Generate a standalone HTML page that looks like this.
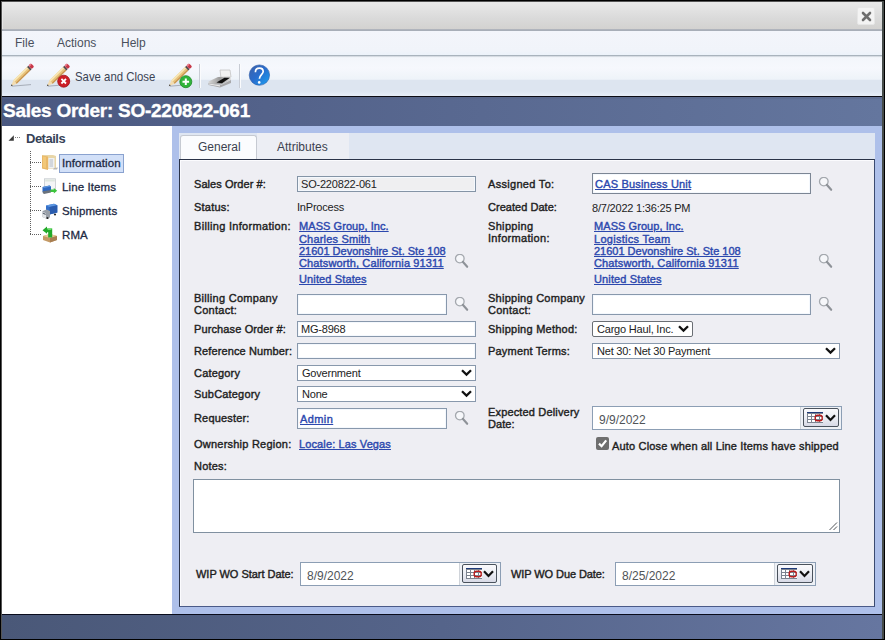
<!DOCTYPE html>
<html><head><meta charset="utf-8"><style>
html,body{margin:0;padding:0}
body{width:885px;height:640px;position:relative;overflow:hidden;background:#000;font-family:"Liberation Sans",sans-serif}
.t{position:absolute;white-space:nowrap;font-family:"Liberation Sans",sans-serif}
a{color:inherit}
</style></head><body>
<div style="position:absolute;left:1px;top:1px;width:883px;height:638px;box-sizing:border-box;background:#555"></div>
<div style="position:absolute;left:2px;top:2px;width:880px;height:27px;box-sizing:border-box;background:linear-gradient(#e9e9e9,#dadada 60%,#d3d2d0)"></div>
<div style="position:absolute;left:2px;top:2px;width:880px;height:1px;box-sizing:border-box;background:#e8e8e8"></div>
<div style="position:absolute;left:2px;top:2px;width:1px;height:27px;box-sizing:border-box;background:#e6e6e6"></div>
<div style="position:absolute;left:2px;top:29px;width:880px;height:1px;box-sizing:border-box;background:#b0b4bc"></div>
<div style="position:absolute;left:2px;top:30px;width:880px;height:1px;box-sizing:border-box;background:#a8aeb8"></div>
<div style="position:absolute;left:857px;top:7px;width:18px;height:18px;box-sizing:border-box;background:#f3f3f3;border-radius:2px;border:1px solid #e6e6e6"></div>
<svg style="position:absolute;left:861px;top:11px" width="11" height="11" viewBox="0 0 11 11"><path d="M2 2 L9 9 M9 2 L2 9" stroke="#6e6e6e" stroke-width="2.6" stroke-linecap="round"/></svg>
<div style="position:absolute;left:2px;top:31px;width:880px;height:24px;box-sizing:border-box;background:linear-gradient(#f3f5fb,#f1f4fa 80%,#ecf2fa)"></div>
<div style="position:absolute;left:2px;top:55px;width:880px;height:1px;box-sizing:border-box;background:#a9b3bd"></div>
<div class="t" style="left:15px;top:36px;font-size:12px;line-height:14px;font-weight:normal;color:#4a505c;letter-spacing:0px;">File</div>
<div class="t" style="left:57px;top:36px;font-size:12px;line-height:14px;font-weight:normal;color:#4a505c;letter-spacing:0px;">Actions</div>
<div class="t" style="left:121px;top:36px;font-size:12px;line-height:14px;font-weight:normal;color:#4a505c;letter-spacing:0px;">Help</div>
<div style="position:absolute;left:2px;top:56px;width:880px;height:40px;box-sizing:border-box;background:linear-gradient(#c9d0d8,#f3f6fb 4%,#f6f8fd 30%,#eef3f9 58%,#dde5f0 61%,#dde5f0 88%,#e7eef8)"></div>
<div style="position:absolute;left:2px;top:96px;width:880px;height:1px;box-sizing:border-box;background:#0c0c14"></div>
<div style="position:absolute;left:2px;top:97px;width:880px;height:29px;box-sizing:border-box;background:linear-gradient(90deg,#4a5880,#53628a 30%,#64769e)"></div>
<div style="position:absolute;left:2px;top:97px;width:880px;height:2px;box-sizing:border-box;background:rgba(90,100,130,0.35)"></div>
<div class="t" style="left:3px;top:100px;font-size:19px;line-height:22px;font-weight:bold;color:#ffffff;letter-spacing:-0.25px;-webkit-text-stroke:0.35px #fff">Sales Order: SO-220822-061</div>
<div style="position:absolute;left:2px;top:126px;width:170px;height:488px;box-sizing:border-box;background:#fff"></div>
<div style="position:absolute;left:172px;top:126px;width:710px;height:488px;box-sizing:border-box;background:#aec0ea"></div>
<div style="position:absolute;left:2px;top:614px;width:880px;height:1px;box-sizing:border-box;background:#0a0c1c"></div>
<div style="position:absolute;left:2px;top:615px;width:880px;height:24px;box-sizing:border-box;background:linear-gradient(90deg,#4a5878,#55648a 50%,#6676a0)"></div>
<div style="position:absolute;left:882px;top:1px;width:2px;height:638px;box-sizing:border-box;background:#464c4a"></div>
<div style="position:absolute;left:884px;top:0px;width:1px;height:640px;box-sizing:border-box;background:#000"></div>
<div style="position:absolute;left:179px;top:133px;width:696px;height:26px;box-sizing:border-box;background:#dfe6f2"></div>
<div style="position:absolute;left:257px;top:133px;width:92px;height:26px;box-sizing:border-box;background:#eceef4"></div>
<div style="position:absolute;left:180px;top:135px;width:77px;height:25px;box-sizing:border-box;background:#fbfcfe;border:1px solid #c6cad2;border-bottom:none;border-radius:3px 3px 0 0"></div>
<div class="t" style="left:198px;top:140px;font-size:12px;line-height:14px;font-weight:normal;color:#3c4250;letter-spacing:0px;">General</div>
<div class="t" style="left:277px;top:140px;font-size:12px;line-height:14px;font-weight:normal;color:#3c4250;letter-spacing:0px;">Attributes</div>
<div style="position:absolute;left:179px;top:159px;width:696px;height:448px;box-sizing:border-box;background:#eeeef3;border:1px solid #2a3348;border-right-color:#3a4a70;border-bottom-color:#4a5a88"></div>
<div style="position:absolute;left:180px;top:160px;width:694px;height:1px;box-sizing:border-box;background:#fbfbfe"></div>
<div style="position:absolute;left:180px;top:160px;width:1px;height:446px;box-sizing:border-box;background:#fbfbfe"></div>
<svg style="position:absolute;left:8px;top:134px" width="14" height="8" viewBox="0 0 14 8"><polygon points="0.5,6.8 5.8,1.3 5.8,6.8" fill="#3a3a3a"/><rect x="7" y="3" width="1" height="1" fill="#808080"/><rect x="9" y="3" width="1" height="1" fill="#808080"/><rect x="11" y="3" width="1" height="1" fill="#808080"/></svg>
<div class="t" style="left:26px;top:131px;font-size:13px;line-height:15px;font-weight:bold;color:#364256;letter-spacing:-0.5px;">Details</div>
<svg style="position:absolute;left:29px;top:151px" width="14" height="90" viewBox="0 0 14 90"><rect x="1" y="0" width="1" height="1" fill="#606060"/><rect x="1" y="2" width="1" height="1" fill="#606060"/><rect x="1" y="4" width="1" height="1" fill="#606060"/><rect x="1" y="6" width="1" height="1" fill="#606060"/><rect x="1" y="8" width="1" height="1" fill="#606060"/><rect x="1" y="10" width="1" height="1" fill="#606060"/><rect x="1" y="12" width="1" height="1" fill="#606060"/><rect x="1" y="14" width="1" height="1" fill="#606060"/><rect x="1" y="16" width="1" height="1" fill="#606060"/><rect x="1" y="18" width="1" height="1" fill="#606060"/><rect x="1" y="20" width="1" height="1" fill="#606060"/><rect x="1" y="22" width="1" height="1" fill="#606060"/><rect x="1" y="24" width="1" height="1" fill="#606060"/><rect x="1" y="26" width="1" height="1" fill="#606060"/><rect x="1" y="28" width="1" height="1" fill="#606060"/><rect x="1" y="30" width="1" height="1" fill="#606060"/><rect x="1" y="32" width="1" height="1" fill="#606060"/><rect x="1" y="34" width="1" height="1" fill="#606060"/><rect x="1" y="36" width="1" height="1" fill="#606060"/><rect x="1" y="38" width="1" height="1" fill="#606060"/><rect x="1" y="40" width="1" height="1" fill="#606060"/><rect x="1" y="42" width="1" height="1" fill="#606060"/><rect x="1" y="44" width="1" height="1" fill="#606060"/><rect x="1" y="46" width="1" height="1" fill="#606060"/><rect x="1" y="48" width="1" height="1" fill="#606060"/><rect x="1" y="50" width="1" height="1" fill="#606060"/><rect x="1" y="52" width="1" height="1" fill="#606060"/><rect x="1" y="54" width="1" height="1" fill="#606060"/><rect x="1" y="56" width="1" height="1" fill="#606060"/><rect x="1" y="58" width="1" height="1" fill="#606060"/><rect x="1" y="60" width="1" height="1" fill="#606060"/><rect x="1" y="62" width="1" height="1" fill="#606060"/><rect x="1" y="64" width="1" height="1" fill="#606060"/><rect x="1" y="66" width="1" height="1" fill="#606060"/><rect x="1" y="68" width="1" height="1" fill="#606060"/><rect x="1" y="70" width="1" height="1" fill="#606060"/><rect x="1" y="72" width="1" height="1" fill="#606060"/><rect x="1" y="74" width="1" height="1" fill="#606060"/><rect x="1" y="76" width="1" height="1" fill="#606060"/><rect x="1" y="78" width="1" height="1" fill="#606060"/><rect x="1" y="80" width="1" height="1" fill="#606060"/><rect x="1" y="82" width="1" height="1" fill="#606060"/><rect x="1" y="11" width="1" height="1" fill="#606060"/><rect x="3" y="11" width="1" height="1" fill="#606060"/><rect x="5" y="11" width="1" height="1" fill="#606060"/><rect x="7" y="11" width="1" height="1" fill="#606060"/><rect x="9" y="11" width="1" height="1" fill="#606060"/><rect x="11" y="11" width="1" height="1" fill="#606060"/><rect x="1" y="35" width="1" height="1" fill="#606060"/><rect x="3" y="35" width="1" height="1" fill="#606060"/><rect x="5" y="35" width="1" height="1" fill="#606060"/><rect x="7" y="35" width="1" height="1" fill="#606060"/><rect x="9" y="35" width="1" height="1" fill="#606060"/><rect x="11" y="35" width="1" height="1" fill="#606060"/><rect x="1" y="59" width="1" height="1" fill="#606060"/><rect x="3" y="59" width="1" height="1" fill="#606060"/><rect x="5" y="59" width="1" height="1" fill="#606060"/><rect x="7" y="59" width="1" height="1" fill="#606060"/><rect x="9" y="59" width="1" height="1" fill="#606060"/><rect x="11" y="59" width="1" height="1" fill="#606060"/><rect x="1" y="83" width="1" height="1" fill="#606060"/><rect x="3" y="83" width="1" height="1" fill="#606060"/><rect x="5" y="83" width="1" height="1" fill="#606060"/><rect x="7" y="83" width="1" height="1" fill="#606060"/><rect x="9" y="83" width="1" height="1" fill="#606060"/><rect x="11" y="83" width="1" height="1" fill="#606060"/></svg>
<div style="position:absolute;left:59px;top:154px;width:65px;height:19px;box-sizing:border-box;background:#d2e0f8;border:1px solid #8aa2cf"></div>
<div class="t" style="left:62px;top:156px;font-size:11.5px;line-height:14px;font-weight:normal;color:#1e2a44;letter-spacing:0.1px;-webkit-text-stroke:0.3px #1e2a44">Information</div>
<div class="t" style="left:62px;top:180px;font-size:11.5px;line-height:14px;font-weight:normal;color:#1e2a44;letter-spacing:0.1px;-webkit-text-stroke:0.3px #1e2a44">Line Items</div>
<div class="t" style="left:62px;top:204px;font-size:11.5px;line-height:14px;font-weight:normal;color:#1e2a44;letter-spacing:0.1px;-webkit-text-stroke:0.3px #1e2a44">Shipments</div>
<div class="t" style="left:62px;top:228px;font-size:11.5px;line-height:14px;font-weight:normal;color:#1e2a44;letter-spacing:0.1px;-webkit-text-stroke:0.3px #1e2a44">RMA</div>
<svg style="position:absolute;left:41px;top:154px" width="17" height="17" viewBox="0 0 17 17">
<path d="M1 1 L12 1 L15 2 L15 15 L3 15 L1 14 Z" fill="#e8d6a8"/>
<path d="M1 1.5 L7 2.5 L7 16 L1 14.5 Z" fill="#e9b868"/>
<path d="M2 2.5 L5 3 L5 14 L2 13.5 Z" fill="#f2c878"/>
<rect x="7.5" y="4" width="6" height="10.5" fill="#eef0f2"/>
<rect x="8.5" y="5" width="3.5" height="8" fill="#d2d6dc"/>
<path d="M13 14 L17 13.5 L16 15.5 L12 15.5 Z" fill="#b8b8b8"/>
</svg>
<svg style="position:absolute;left:42px;top:178px" width="16" height="17" viewBox="0 0 16 17">
<rect x="2.5" y="0.8" width="11" height="12.5" fill="#f4f5f6" stroke="#c6cacf" stroke-width="0.8"/>
<rect x="3.2" y="1.5" width="9.6" height="2" fill="#dde6de"/>
<path d="M0.5 9 L7.5 7.5 L9 8.5 L9 13.5 L2 15 L0.5 14 Z" fill="#2e68c0"/>
<path d="M0.5 9 L7.5 7.5 L9 8.5 L2 10 Z" fill="#5a92dc"/>
<path d="M0.8 13.3 L9 12 L9 14.5 L2 16 L0.8 15 Z" fill="#6c737c"/>
<path d="M8.5 11.6 L11.8 11.6 L11.8 10 L15.2 12.8 L11.8 15.6 L11.8 14 L8.5 14 Z" fill="#3cc43c"/>
</svg>
<svg style="position:absolute;left:42px;top:203px" width="16" height="16" viewBox="0 0 16 16">
<path d="M4 2.5 L12 0.8 L15.3 2.2 L15.3 9.5 L7.5 11.5 L4 10 Z" fill="#3470c8"/>
<path d="M4 2.5 L12 0.8 L15.3 2.2 L7.5 4 Z" fill="#5c96e2"/>
<path d="M7.5 4 L15.3 2.2 L15.3 9.5 L7.5 11.5 Z" fill="#2a5cae"/>
<path d="M0.5 8 L4.5 6.5 L8 8 L8 14.5 L4 15.5 L0.5 14 Z" fill="#9aa0a8"/>
<path d="M0.5 8.8 L4 10.2 L4 15.5 L0.5 14 Z" fill="#e4e6e8"/>
<path d="M0.8 9.6 L3.7 10.8 L3.7 12 L0.8 10.8 Z" fill="#5a6470"/>
<circle cx="5.5" cy="15" r="1.1" fill="#2a2a2a"/><circle cx="13" cy="11.5" r="1.1" fill="#2a2a2a"/>
</svg>
<svg style="position:absolute;left:41px;top:226px" width="17" height="17" viewBox="0 0 17 17">
<path d="M2 10 L9 8 L16 10 L16 14 L9 16.5 L2 14 Z" fill="#c49a66"/>
<path d="M2 10 L9 12 L16 10 L9 8 Z" fill="#e4c896"/>
<path d="M9 12 L16 10 L16 14 L9 16.5 Z" fill="#a87e52"/>
<path d="M1.5 4.2 L6 0.6 L6 2.6 L11.2 2.6 L11.2 11.5 L7.2 11.5 L7.2 6.2 L6 6.2 L6 7.8 Z" fill="#22aa2a"/>
<path d="M6 2.6 L11.2 2.6 L10 4 L7 4 Z" fill="#6ade6a"/>
</svg>
<svg style="position:absolute;left:9px;top:63px" width="26" height="26" viewBox="0 0 26 26"><path d="M3 23.2 L22 21.6" stroke="#8c929c" stroke-width="0.9" opacity="0.75"/><g transform="translate(1.8,23.2) rotate(-44.3)"><polygon points="0,0 6,-2.3 6,2.3" fill="#f2dcb0"/><polygon points="0,0 2,-0.8 2,0.8" fill="#383838"/><rect x="6" y="-2.3" width="19" height="4.6" fill="#e8c47c"/><rect x="6" y="-2.3" width="19" height="1.6" fill="#f8e8b8"/><rect x="6" y="1.2" width="19" height="1.1" fill="#c89450"/><rect x="25" y="-2.3" width="1.8" height="4.6" fill="#50484a"/><rect x="26.8" y="-2.4" width="3.6" height="4.8" rx="1.2" fill="#c83848"/><rect x="26.8" y="-2.4" width="3.2" height="1.6" rx="0.8" fill="#e87888"/></g></svg>
<svg style="position:absolute;left:45px;top:63px" width="26" height="26" viewBox="0 0 26 26"><path d="M3 23.2 L22 21.6" stroke="#8c929c" stroke-width="0.9" opacity="0.75"/><g transform="translate(1.8,23.2) rotate(-44.3)"><polygon points="0,0 6,-2.3 6,2.3" fill="#f2dcb0"/><polygon points="0,0 2,-0.8 2,0.8" fill="#383838"/><rect x="6" y="-2.3" width="19" height="4.6" fill="#e8c47c"/><rect x="6" y="-2.3" width="19" height="1.6" fill="#f8e8b8"/><rect x="6" y="1.2" width="19" height="1.1" fill="#c89450"/><rect x="25" y="-2.3" width="1.8" height="4.6" fill="#50484a"/><rect x="26.8" y="-2.4" width="3.6" height="4.8" rx="1.2" fill="#c83848"/><rect x="26.8" y="-2.4" width="3.2" height="1.6" rx="0.8" fill="#e87888"/></g><circle cx="18.7" cy="18.2" r="6" fill="#cc1e26" stroke="#a01218" stroke-width="0.8"/><path d="M16.4 15.9 L21 20.5 M21 15.9 L16.4 20.5" stroke="#fff" stroke-width="1.8"/></svg>
<div class="t" style="left:75px;top:69px;font-size:13px;line-height:15px;font-weight:normal;color:#3c4454;letter-spacing:0px;transform:scaleX(0.875);transform-origin:0 0">Save and Close</div>
<svg style="position:absolute;left:167px;top:63px" width="26" height="26" viewBox="0 0 26 26"><path d="M3 23.2 L22 21.6" stroke="#8c929c" stroke-width="0.9" opacity="0.75"/><g transform="translate(1.8,23.2) rotate(-44.3)"><polygon points="0,0 6,-2.3 6,2.3" fill="#f2dcb0"/><polygon points="0,0 2,-0.8 2,0.8" fill="#383838"/><rect x="6" y="-2.3" width="19" height="4.6" fill="#e8c47c"/><rect x="6" y="-2.3" width="19" height="1.6" fill="#f8e8b8"/><rect x="6" y="1.2" width="19" height="1.1" fill="#c89450"/><rect x="25" y="-2.3" width="1.8" height="4.6" fill="#50484a"/><rect x="26.8" y="-2.4" width="3.6" height="4.8" rx="1.2" fill="#c83848"/><rect x="26.8" y="-2.4" width="3.2" height="1.6" rx="0.8" fill="#e87888"/></g><circle cx="18.8" cy="18.7" r="6" fill="#30b43a" stroke="#1a8a22" stroke-width="0.8"/><path d="M18.8 15.4 V22 M15.5 18.7 H22.1" stroke="#fff" stroke-width="2"/></svg>
<div style="position:absolute;left:199px;top:64px;width:1px;height:24px;box-sizing:border-box;background:#c8ccd4"></div>
<div style="position:absolute;left:200px;top:64px;width:1px;height:24px;box-sizing:border-box;background:#fafbfd"></div>
<svg style="position:absolute;left:204px;top:62px" width="32" height="28" viewBox="0 0 32 28">
<defs><linearGradient id="pg" x1="0" y1="0" x2="1" y2="0"><stop offset="0" stop-color="#d8d8d8"/><stop offset="0.5" stop-color="#9a9a9a"/><stop offset="1" stop-color="#e0e0e0"/></linearGradient></defs>
<path d="M16 8 L26 8 L27 15 L17 16 Z" fill="#f2f2f2" stroke="#c4c4c4" stroke-width="0.8"/>
<path d="M4.5 19.5 L14 15 L26.5 14.5 L27 18 L17 22.5 L4.5 21.5 Z" fill="url(#pg)"/>
<path d="M12.5 20.5 L20.5 15.8 L26 15.8 L18 21.2 Z" fill="#101010"/>
<path d="M4.5 21 L17 23 L27 18 L27 21 L16 25.5 L4.5 23 Z" fill="#a8a8aa"/>
<path d="M5 21.5 L16 23.3 L16 24.5 L5 22.5 Z" fill="#e8e8e8"/>
</svg>
<div style="position:absolute;left:239px;top:64px;width:1px;height:24px;box-sizing:border-box;background:#c8ccd4"></div>
<div style="position:absolute;left:240px;top:64px;width:1px;height:24px;box-sizing:border-box;background:#fafbfd"></div>
<svg style="position:absolute;left:248px;top:63px" width="23" height="24" viewBox="0 0 23 24">
<defs><linearGradient id="hg" x1="0.1" y1="0.1" x2="0.9" y2="0.9"><stop offset="0" stop-color="#3a64b0"/><stop offset="0.45" stop-color="#2a6ccc"/><stop offset="1" stop-color="#1c98ec"/></linearGradient></defs>
<circle cx="11.4" cy="12.1" r="10.2" fill="url(#hg)" stroke="#2a5aa8" stroke-width="0.6"/>
<path d="M7.4 9.3 C7.4 6.5 9.2 5.2 11.4 5.2 C13.7 5.2 15.2 6.6 15.2 8.6 C15.2 11.2 11.6 11.6 11.4 15.8" fill="none" stroke="#fff" stroke-width="1.7"/>
<circle cx="11.2" cy="19.4" r="1.3" fill="#fff"/>
</svg>
<div class="t" style="left:194px;top:178px;font-size:11px;line-height:13px;font-weight:normal;color:#1e1e1e;letter-spacing:0.062px;-webkit-text-stroke:0.4px #1e1e1e;">Sales Order #:</div>
<div class="t" style="left:194px;top:201px;font-size:11px;line-height:13px;font-weight:normal;color:#1e1e1e;letter-spacing:0.234px;-webkit-text-stroke:0.4px #1e1e1e;">Status:</div>
<div class="t" style="left:194px;top:220px;font-size:11px;line-height:13px;font-weight:normal;color:#1e1e1e;letter-spacing:0.316px;-webkit-text-stroke:0.4px #1e1e1e;">Billing Information:</div>
<div class="t" style="left:194px;top:292px;font-size:11px;line-height:13px;font-weight:normal;color:#1e1e1e;letter-spacing:0.286px;-webkit-text-stroke:0.4px #1e1e1e;">Billing Company</div>
<div class="t" style="left:194px;top:304px;font-size:11px;line-height:13px;font-weight:normal;color:#1e1e1e;letter-spacing:0.256px;-webkit-text-stroke:0.4px #1e1e1e;">Contact:</div>
<div class="t" style="left:194px;top:323px;font-size:11px;line-height:13px;font-weight:normal;color:#1e1e1e;letter-spacing:0.124px;-webkit-text-stroke:0.4px #1e1e1e;">Purchase Order #:</div>
<div class="t" style="left:194px;top:345px;font-size:11px;line-height:13px;font-weight:normal;color:#1e1e1e;letter-spacing:0.122px;-webkit-text-stroke:0.4px #1e1e1e;">Reference Number:</div>
<div class="t" style="left:194px;top:367px;font-size:11px;line-height:13px;font-weight:normal;color:#1e1e1e;letter-spacing:0.182px;-webkit-text-stroke:0.4px #1e1e1e;">Category</div>
<div class="t" style="left:194px;top:388px;font-size:11px;line-height:13px;font-weight:normal;color:#1e1e1e;letter-spacing:0.186px;-webkit-text-stroke:0.4px #1e1e1e;">SubCategory</div>
<div class="t" style="left:194px;top:412px;font-size:11px;line-height:13px;font-weight:normal;color:#1e1e1e;letter-spacing:0.166px;-webkit-text-stroke:0.4px #1e1e1e;">Requester:</div>
<div class="t" style="left:194px;top:438px;font-size:11px;line-height:13px;font-weight:normal;color:#1e1e1e;letter-spacing:0.228px;-webkit-text-stroke:0.4px #1e1e1e;">Ownership Region:</div>
<div class="t" style="left:194px;top:460px;font-size:11px;line-height:13px;font-weight:normal;color:#1e1e1e;letter-spacing:0.206px;-webkit-text-stroke:0.4px #1e1e1e;">Notes:</div>
<div style="position:absolute;left:297px;top:176px;width:179px;height:16px;box-sizing:border-box;background:#efeff1;border:1px solid #8494a6;box-shadow:inset 0 0 0 1px #f4f8fd"></div>
<div class="t" style="left:301px;top:178px;font-size:11px;line-height:13px;font-weight:normal;color:#222;letter-spacing:-0.2px;">SO-220822-061</div>
<div class="t" style="left:297px;top:201px;font-size:11px;line-height:13px;font-weight:normal;color:#222;letter-spacing:-0.2px;">InProcess</div>
<div class="t" style="left:299px;top:220px;font-size:11px;line-height:13px;font-weight:normal;color:#2c48ae;letter-spacing:0.065px;-webkit-text-stroke:0.4px #2c48ae;text-decoration:underline">MASS Group, Inc.</div>
<div class="t" style="left:299px;top:233px;font-size:11px;line-height:13px;font-weight:normal;color:#2c48ae;letter-spacing:0.177px;-webkit-text-stroke:0.4px #2c48ae;text-decoration:underline">Charles Smith</div>
<div class="t" style="left:299px;top:245px;font-size:11px;line-height:13px;font-weight:normal;color:#2c48ae;letter-spacing:-0.004px;-webkit-text-stroke:0.4px #2c48ae;text-decoration:underline">21601 Devonshire St. Ste 108</div>
<div class="t" style="left:299px;top:257px;font-size:11px;line-height:13px;font-weight:normal;color:#2c48ae;letter-spacing:0.133px;-webkit-text-stroke:0.4px #2c48ae;text-decoration:underline">Chatsworth, California 91311</div>
<div class="t" style="left:299px;top:273px;font-size:11px;line-height:13px;font-weight:normal;color:#2c48ae;letter-spacing:0.127px;-webkit-text-stroke:0.4px #2c48ae;text-decoration:underline">United States</div>
<svg style="position:absolute;left:454px;top:254px" width="16" height="16" viewBox="0 0 16 16"><circle cx="5.8" cy="4.6" r="4.3" fill="#f6f7fa" stroke="#a4a8ae" stroke-width="1.3"/><line x1="8.8" y1="7.8" x2="13.2" y2="12.8" stroke="#8e9298" stroke-width="2.1" stroke-linecap="round"/></svg>
<div style="position:absolute;left:297px;top:294px;width:150px;height:21px;box-sizing:border-box;background:#fff;border:1px solid #8898ac;box-shadow:inset 0 0 0 1px #f4f8fd"></div>
<svg style="position:absolute;left:454px;top:297px" width="16" height="16" viewBox="0 0 16 16"><circle cx="5.8" cy="4.6" r="4.3" fill="#f6f7fa" stroke="#a4a8ae" stroke-width="1.3"/><line x1="8.8" y1="7.8" x2="13.2" y2="12.8" stroke="#8e9298" stroke-width="2.1" stroke-linecap="round"/></svg>
<div style="position:absolute;left:297px;top:321px;width:179px;height:16px;box-sizing:border-box;background:#fff;border:1px solid #8898ac;box-shadow:inset 0 0 0 1px #f4f8fd"></div>
<div class="t" style="left:301px;top:323px;font-size:11px;line-height:13px;font-weight:normal;color:#222;letter-spacing:-0.2px;">MG-8968</div>
<div style="position:absolute;left:297px;top:343px;width:179px;height:16px;box-sizing:border-box;background:#fff;border:1px solid #8898ac;box-shadow:inset 0 0 0 1px #f4f8fd"></div>
<div style="position:absolute;left:297px;top:365px;width:179px;height:16px;box-sizing:border-box;background:#fff;border:1px solid #8898ac;border-radius:0px"></div>
<div class="t" style="left:302px;top:367px;font-size:11px;line-height:13px;font-weight:normal;color:#222;letter-spacing:-0.2px;">Government</div>
<svg style="position:absolute;left:461px;top:369px" width="11" height="7.6" viewBox="0 0 11 7.6"><polyline points="1,1.2 5.5,5.6 10,1.2" fill="none" stroke="#111" stroke-width="2.3"/></svg>
<div style="position:absolute;left:297px;top:386px;width:179px;height:16px;box-sizing:border-box;background:#fff;border:1px solid #8898ac;border-radius:0px"></div>
<div class="t" style="left:302px;top:388px;font-size:11px;line-height:13px;font-weight:normal;color:#222;letter-spacing:-0.2px;">None</div>
<svg style="position:absolute;left:461px;top:390px" width="11" height="7.6" viewBox="0 0 11 7.6"><polyline points="1,1.2 5.5,5.6 10,1.2" fill="none" stroke="#111" stroke-width="2.3"/></svg>
<div style="position:absolute;left:297px;top:408px;width:150px;height:21px;box-sizing:border-box;background:#fff;border:1px solid #8898ac;box-shadow:inset 0 0 0 1px #f4f8fd"></div>
<div class="t" style="left:300px;top:413px;font-size:11px;line-height:13px;font-weight:normal;color:#2c48ae;letter-spacing:0.409px;-webkit-text-stroke:0.4px #2c48ae;text-decoration:underline">Admin</div>
<svg style="position:absolute;left:454px;top:411px" width="16" height="16" viewBox="0 0 16 16"><circle cx="5.8" cy="4.6" r="4.3" fill="#f6f7fa" stroke="#a4a8ae" stroke-width="1.3"/><line x1="8.8" y1="7.8" x2="13.2" y2="12.8" stroke="#8e9298" stroke-width="2.1" stroke-linecap="round"/></svg>
<div class="t" style="left:299px;top:438px;font-size:11px;line-height:13px;font-weight:normal;color:#2c48ae;letter-spacing:0.122px;-webkit-text-stroke:0.4px #2c48ae;text-decoration:underline">Locale: Las Vegas</div>
<div style="position:absolute;left:193px;top:479px;width:647px;height:54px;box-sizing:border-box;background:#fff;border:1px solid #8090a0"></div>
<svg style="position:absolute;left:828px;top:521px" width="10" height="10" viewBox="0 0 10 10"><path d="M1.5 9 L9 1.5 M5.5 9 L9 5.5" stroke="#505458" stroke-width="1"/></svg>
<div class="t" style="left:488px;top:178px;font-size:11px;line-height:13px;font-weight:normal;color:#1e1e1e;letter-spacing:0.305px;-webkit-text-stroke:0.4px #1e1e1e;">Assigned To:</div>
<div class="t" style="left:488px;top:201px;font-size:11px;line-height:13px;font-weight:normal;color:#1e1e1e;letter-spacing:0.034px;-webkit-text-stroke:0.4px #1e1e1e;">Created Date:</div>
<div class="t" style="left:488px;top:220px;font-size:11px;line-height:13px;font-weight:normal;color:#1e1e1e;letter-spacing:0.328px;-webkit-text-stroke:0.4px #1e1e1e;">Shipping</div>
<div class="t" style="left:488px;top:232px;font-size:11px;line-height:13px;font-weight:normal;color:#1e1e1e;letter-spacing:0.306px;-webkit-text-stroke:0.4px #1e1e1e;">Information:</div>
<div class="t" style="left:488px;top:292px;font-size:11px;line-height:13px;font-weight:normal;color:#1e1e1e;letter-spacing:0.255px;-webkit-text-stroke:0.4px #1e1e1e;">Shipping Company</div>
<div class="t" style="left:488px;top:304px;font-size:11px;line-height:13px;font-weight:normal;color:#1e1e1e;letter-spacing:0.256px;-webkit-text-stroke:0.4px #1e1e1e;">Contact:</div>
<div class="t" style="left:488px;top:323px;font-size:11px;line-height:13px;font-weight:normal;color:#1e1e1e;letter-spacing:0.253px;-webkit-text-stroke:0.4px #1e1e1e;">Shipping Method:</div>
<div class="t" style="left:488px;top:345px;font-size:11px;line-height:13px;font-weight:normal;color:#1e1e1e;letter-spacing:0.193px;-webkit-text-stroke:0.4px #1e1e1e;">Payment Terms:</div>
<div class="t" style="left:488px;top:406px;font-size:11px;line-height:13px;font-weight:normal;color:#1e1e1e;letter-spacing:0.160px;-webkit-text-stroke:0.4px #1e1e1e;">Expected Delivery</div>
<div class="t" style="left:488px;top:418px;font-size:11px;line-height:13px;font-weight:normal;color:#1e1e1e;letter-spacing:0.044px;-webkit-text-stroke:0.4px #1e1e1e;">Date:</div>
<div style="position:absolute;left:592px;top:173px;width:219px;height:21px;box-sizing:border-box;background:#fff;border:1px solid #7c8694;box-shadow:inset 0 0 0 1px #f4f8fd"></div>
<div class="t" style="left:595px;top:178px;font-size:11px;line-height:13px;font-weight:normal;color:#2c48ae;letter-spacing:0.194px;-webkit-text-stroke:0.4px #2c48ae;text-decoration:underline">CAS Business Unit</div>
<svg style="position:absolute;left:818px;top:177px" width="16" height="16" viewBox="0 0 16 16"><circle cx="5.8" cy="4.6" r="4.3" fill="#f6f7fa" stroke="#a4a8ae" stroke-width="1.3"/><line x1="8.8" y1="7.8" x2="13.2" y2="12.8" stroke="#8e9298" stroke-width="2.1" stroke-linecap="round"/></svg>
<div class="t" style="left:592px;top:202px;font-size:11px;line-height:13px;font-weight:normal;color:#222;letter-spacing:-0.2px;">8/7/2022 1:36:25 PM</div>
<div class="t" style="left:594px;top:220px;font-size:11px;line-height:13px;font-weight:normal;color:#2c48ae;letter-spacing:0.065px;-webkit-text-stroke:0.4px #2c48ae;text-decoration:underline">MASS Group, Inc.</div>
<div class="t" style="left:594px;top:233px;font-size:11px;line-height:13px;font-weight:normal;color:#2c48ae;letter-spacing:0.279px;-webkit-text-stroke:0.4px #2c48ae;text-decoration:underline">Logistics Team</div>
<div class="t" style="left:594px;top:245px;font-size:11px;line-height:13px;font-weight:normal;color:#2c48ae;letter-spacing:-0.004px;-webkit-text-stroke:0.4px #2c48ae;text-decoration:underline">21601 Devonshire St. Ste 108</div>
<div class="t" style="left:594px;top:257px;font-size:11px;line-height:13px;font-weight:normal;color:#2c48ae;letter-spacing:0.133px;-webkit-text-stroke:0.4px #2c48ae;text-decoration:underline">Chatsworth, California 91311</div>
<div class="t" style="left:594px;top:273px;font-size:11px;line-height:13px;font-weight:normal;color:#2c48ae;letter-spacing:0.127px;-webkit-text-stroke:0.4px #2c48ae;text-decoration:underline">United States</div>
<svg style="position:absolute;left:818px;top:254px" width="16" height="16" viewBox="0 0 16 16"><circle cx="5.8" cy="4.6" r="4.3" fill="#f6f7fa" stroke="#a4a8ae" stroke-width="1.3"/><line x1="8.8" y1="7.8" x2="13.2" y2="12.8" stroke="#8e9298" stroke-width="2.1" stroke-linecap="round"/></svg>
<div style="position:absolute;left:592px;top:294px;width:219px;height:21px;box-sizing:border-box;background:#fff;border:1px solid #8898ac;box-shadow:inset 0 0 0 1px #f4f8fd"></div>
<svg style="position:absolute;left:818px;top:297px" width="16" height="16" viewBox="0 0 16 16"><circle cx="5.8" cy="4.6" r="4.3" fill="#f6f7fa" stroke="#a4a8ae" stroke-width="1.3"/><line x1="8.8" y1="7.8" x2="13.2" y2="12.8" stroke="#8e9298" stroke-width="2.1" stroke-linecap="round"/></svg>
<div style="position:absolute;left:592px;top:321px;width:101px;height:16px;box-sizing:border-box;background:#fff;border:1px solid #6a6e74;border-radius:2px"></div>
<div class="t" style="left:597px;top:323px;font-size:11px;line-height:13px;font-weight:normal;color:#222;letter-spacing:-0.2px;">Cargo Haul, Inc.</div>
<svg style="position:absolute;left:678px;top:325px" width="11" height="7.6" viewBox="0 0 11 7.6"><polyline points="1,1.2 5.5,5.6 10,1.2" fill="none" stroke="#111" stroke-width="2.3"/></svg>
<div style="position:absolute;left:592px;top:343px;width:248px;height:16px;box-sizing:border-box;background:#fff;border:1px solid #8898ac;border-radius:0px"></div>
<div class="t" style="left:597px;top:345px;font-size:11px;line-height:13px;font-weight:normal;color:#222;letter-spacing:-0.2px;">Net 30: Net 30 Payment</div>
<svg style="position:absolute;left:825px;top:347px" width="11" height="7.6" viewBox="0 0 11 7.6"><polyline points="1,1.2 5.5,5.6 10,1.2" fill="none" stroke="#111" stroke-width="2.3"/></svg>
<div style="position:absolute;left:592px;top:406px;width:250px;height:24px;box-sizing:border-box;border:1px solid #8c9eb4;background:#eef1f6"></div>
<div style="position:absolute;left:593px;top:407px;width:207px;height:22px;box-sizing:border-box;background:#fff"></div>
<div style="position:absolute;left:800px;top:407px;width:1px;height:22px;box-sizing:border-box;background:#d0d4da"></div>
<div class="t" style="left:599px;top:413px;font-size:12px;line-height:14px;color:#505458;letter-spacing:0px">9/9/2022</div>
<div style="position:absolute;left:803px;top:408px;width:36px;height:19px;box-sizing:border-box;border:1px solid #4a525c;border-radius:2px;background:linear-gradient(#fafafc,#eceef4 50%,#d8dae6)"></div>
<svg style="position:absolute;left:807px;top:412px" width="17" height="12" viewBox="0 0 17 12"><rect x="0" y="0" width="16" height="1" fill="#1e3a78"/><rect x="0" y="1" width="16" height="10" fill="#7c8490"/><rect x="1" y="2" width="3" height="2" fill="#fff"/><rect x="1" y="5" width="3" height="2" fill="#fff"/><rect x="1" y="8" width="3" height="2" fill="#fff"/><rect x="5" y="2" width="3" height="2" fill="#fff"/><rect x="5" y="5" width="3" height="2" fill="#fff"/><rect x="5" y="8" width="3" height="2" fill="#fff"/><rect x="9" y="2" width="3" height="2" fill="#fff"/><rect x="9" y="5" width="3" height="2" fill="#fff"/><rect x="9" y="8" width="3" height="2" fill="#fff"/><rect x="13" y="2" width="3" height="2" fill="#fff"/><rect x="13" y="5" width="3" height="2" fill="#fff"/><rect x="13" y="8" width="3" height="2" fill="#fff"/><rect x="8.2" y="3.2" width="7" height="5.6" rx="2.2" fill="none" stroke="#b81c1c" stroke-width="1.4"/></svg>
<svg style="position:absolute;left:825px;top:414px" width="11" height="8" viewBox="0 0 11 8"><polyline points="1,1.2 5.5,6 10,1.2" fill="none" stroke="#111" stroke-width="2.2"/></svg>
<div style="position:absolute;left:596px;top:437px;width:13px;height:13px;box-sizing:border-box;background:#6e6e6e;border-radius:2px"></div>
<svg style="position:absolute;left:597px;top:438px" width="11" height="11" viewBox="0 0 11 11"><path d="M2 5.6 L4.6 8.2 L9.2 2.4" fill="none" stroke="#fff" stroke-width="2.2"/></svg>
<div class="t" style="left:612px;top:440px;font-size:11px;line-height:13px;font-weight:normal;color:#1e1e1e;letter-spacing:0.168px;-webkit-text-stroke:0.4px #1e1e1e;">Auto Close when all Line Items have shipped</div>
<div class="t" style="left:196px;top:568px;font-size:11px;line-height:13px;font-weight:normal;color:#1e1e1e;letter-spacing:-0.031px;-webkit-text-stroke:0.4px #1e1e1e;">WIP WO Start Date:</div>
<div style="position:absolute;left:300px;top:562px;width:201px;height:24px;box-sizing:border-box;border:1px solid #8c9eb4;background:#eef1f6"></div>
<div style="position:absolute;left:301px;top:563px;width:158px;height:22px;box-sizing:border-box;background:#fff"></div>
<div style="position:absolute;left:459px;top:563px;width:1px;height:22px;box-sizing:border-box;background:#d0d4da"></div>
<div class="t" style="left:307px;top:569px;font-size:12px;line-height:14px;color:#505458;letter-spacing:0px">8/9/2022</div>
<div style="position:absolute;left:462px;top:564px;width:35px;height:19px;box-sizing:border-box;border:1px solid #4a525c;border-radius:2px;background:linear-gradient(#fafafc,#eceef4 50%,#d8dae6)"></div>
<svg style="position:absolute;left:466px;top:568px" width="17" height="12" viewBox="0 0 17 12"><rect x="0" y="0" width="16" height="1" fill="#1e3a78"/><rect x="0" y="1" width="16" height="10" fill="#7c8490"/><rect x="1" y="2" width="3" height="2" fill="#fff"/><rect x="1" y="5" width="3" height="2" fill="#fff"/><rect x="1" y="8" width="3" height="2" fill="#fff"/><rect x="5" y="2" width="3" height="2" fill="#fff"/><rect x="5" y="5" width="3" height="2" fill="#fff"/><rect x="5" y="8" width="3" height="2" fill="#fff"/><rect x="9" y="2" width="3" height="2" fill="#fff"/><rect x="9" y="5" width="3" height="2" fill="#fff"/><rect x="9" y="8" width="3" height="2" fill="#fff"/><rect x="13" y="2" width="3" height="2" fill="#fff"/><rect x="13" y="5" width="3" height="2" fill="#fff"/><rect x="13" y="8" width="3" height="2" fill="#fff"/><rect x="8.2" y="3.2" width="7" height="5.6" rx="2.2" fill="none" stroke="#b81c1c" stroke-width="1.4"/></svg>
<svg style="position:absolute;left:483px;top:570px" width="11" height="8" viewBox="0 0 11 8"><polyline points="1,1.2 5.5,6 10,1.2" fill="none" stroke="#111" stroke-width="2.2"/></svg>
<div class="t" style="left:511px;top:568px;font-size:11px;line-height:13px;font-weight:normal;color:#1e1e1e;letter-spacing:-0.086px;-webkit-text-stroke:0.4px #1e1e1e;">WIP WO Due Date:</div>
<div style="position:absolute;left:615px;top:562px;width:201px;height:24px;box-sizing:border-box;border:1px solid #8c9eb4;background:#eef1f6"></div>
<div style="position:absolute;left:616px;top:563px;width:158px;height:22px;box-sizing:border-box;background:#fff"></div>
<div style="position:absolute;left:774px;top:563px;width:1px;height:22px;box-sizing:border-box;background:#d0d4da"></div>
<div class="t" style="left:622px;top:569px;font-size:12px;line-height:14px;color:#505458;letter-spacing:0px">8/25/2022</div>
<div style="position:absolute;left:777px;top:564px;width:36px;height:19px;box-sizing:border-box;border:1px solid #4a525c;border-radius:2px;background:linear-gradient(#fafafc,#eceef4 50%,#d8dae6)"></div>
<svg style="position:absolute;left:781px;top:568px" width="17" height="12" viewBox="0 0 17 12"><rect x="0" y="0" width="16" height="1" fill="#1e3a78"/><rect x="0" y="1" width="16" height="10" fill="#7c8490"/><rect x="1" y="2" width="3" height="2" fill="#fff"/><rect x="1" y="5" width="3" height="2" fill="#fff"/><rect x="1" y="8" width="3" height="2" fill="#fff"/><rect x="5" y="2" width="3" height="2" fill="#fff"/><rect x="5" y="5" width="3" height="2" fill="#fff"/><rect x="5" y="8" width="3" height="2" fill="#fff"/><rect x="9" y="2" width="3" height="2" fill="#fff"/><rect x="9" y="5" width="3" height="2" fill="#fff"/><rect x="9" y="8" width="3" height="2" fill="#fff"/><rect x="13" y="2" width="3" height="2" fill="#fff"/><rect x="13" y="5" width="3" height="2" fill="#fff"/><rect x="13" y="8" width="3" height="2" fill="#fff"/><rect x="8.2" y="3.2" width="7" height="5.6" rx="2.2" fill="none" stroke="#b81c1c" stroke-width="1.4"/></svg>
<svg style="position:absolute;left:799px;top:570px" width="11" height="8" viewBox="0 0 11 8"><polyline points="1,1.2 5.5,6 10,1.2" fill="none" stroke="#111" stroke-width="2.2"/></svg>
</body></html>
